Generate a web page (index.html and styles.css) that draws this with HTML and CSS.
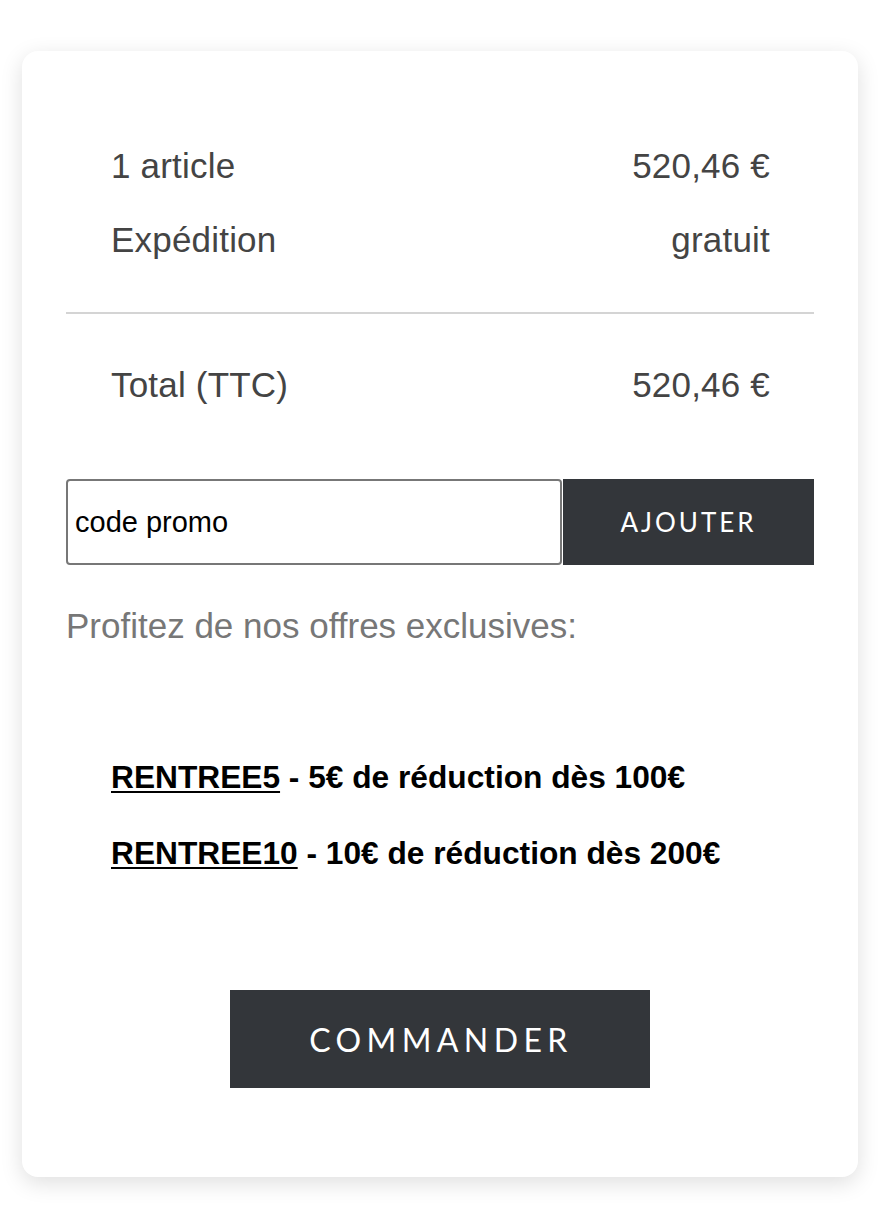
FILE: index.html
```html
<!DOCTYPE html>
<html lang="fr">
<head>
<meta charset="utf-8">
<title>Panier</title>
<link rel="stylesheet" href="styles.css">
</head>
<body>
<div class="page">
  <section class="card">
    <div class="summary">
      <div class="row"><span>1 article</span><span>520,46 €</span></div>
      <div class="row"><span>Expédition</span><span>gratuit</span></div>
    </div>
    <hr class="divider">
    <div class="summary total">
      <div class="row"><span>Total (TTC)</span><span>520,46 €</span></div>
    </div>
    <form class="promo">
      <input class="promo-input" type="text" value="code promo">
      <button class="promo-btn" type="button">Ajouter</button>
    </form>
    <p class="offers-title">Profitez de nos offres exclusives:</p>
    <ul class="offers">
      <li><a href="#" class="code">RENTREE5</a> - 5€ de réduction dès 100€</li>
      <li><a href="#" class="code">RENTREE10</a> - 10€ de réduction dès 200€</li>
    </ul>
    <div class="checkout">
      <button class="checkout-btn" type="button">Commander</button>
    </div>
  </section>
</div>
</body>
</html>
```
FILE: styles.css
```css
* { box-sizing: border-box; }
html, body { margin: 0; padding: 0; background: #ffffff; }
body { font-family: "Liberation Sans", Arial, Helvetica, sans-serif; }

.page {
  padding: 51px 38px 37px 22px;
}

.card {
  background: #fff;
  border-radius: 16px;
  box-shadow: 0 6px 22px rgba(0, 0, 0, 0.13);
  padding: 95px 44px 89px 44px;
}

.summary {
  display: flex;
  flex-direction: column;
  gap: 34px;
  padding: 0 44px 0 45px;
  color: #444;
  font-size: 35px;
  line-height: 40px;
  letter-spacing: 0.2px;
}

.row {
  display: flex;
  justify-content: space-between;
}

.divider {
  margin: 52px 0 0 0;
  border: 0;
  border-top: 2px solid #d4d4d4;
  height: 0;
}

.total {
  margin-top: 51px;
}

.promo {
  display: flex;
  margin: 74px 0 0 0;
  height: 86px;
}

.promo-input {
  width: 496px;
  height: 86px;
  margin: 0;
  border: 2px solid #777;
  border-radius: 4px;
  padding: 0 7px;
  font-family: "Liberation Sans", Arial, sans-serif;
  font-size: 29px;
  color: #000;
  outline: none;
}

.promo-btn {
  flex: 1;
  margin: 0 0 0 1px;
  border: 0;
  background: #33363a;
  color: #fff;
  font-family: Lato, sans-serif;
  font-size: 26px;
  letter-spacing: 3px;
  text-transform: uppercase;
  padding: 0;
  cursor: pointer;
}

.offers-title {
  margin: 41px 0 0 0;
  font-size: 35px;
  line-height: 40px;
  color: #777;
}

.offers {
  list-style: none;
  margin: 113px 0 0 0;
  padding: 0 0 0 45px;
  display: flex;
  flex-direction: column;
  gap: 39px;
  font-weight: bold;
  font-size: 31.7px;
  line-height: 37px;
  color: #000;
}

.code {
  color: #000;
  text-decoration: underline;
  text-underline-offset: 3px;
  text-decoration-thickness: 2px;
}

.checkout {
  display: flex;
  justify-content: center;
  margin-top: 118px;
}

.checkout-btn {
  width: 420px;
  height: 98px;
  border: 0;
  background: #33363a;
  color: #fff;
  font-family: Lato, sans-serif;
  font-size: 32px;
  letter-spacing: 5.4px;
  text-transform: uppercase;
  padding: 0 0 0 2px;
  cursor: pointer;
}
```
